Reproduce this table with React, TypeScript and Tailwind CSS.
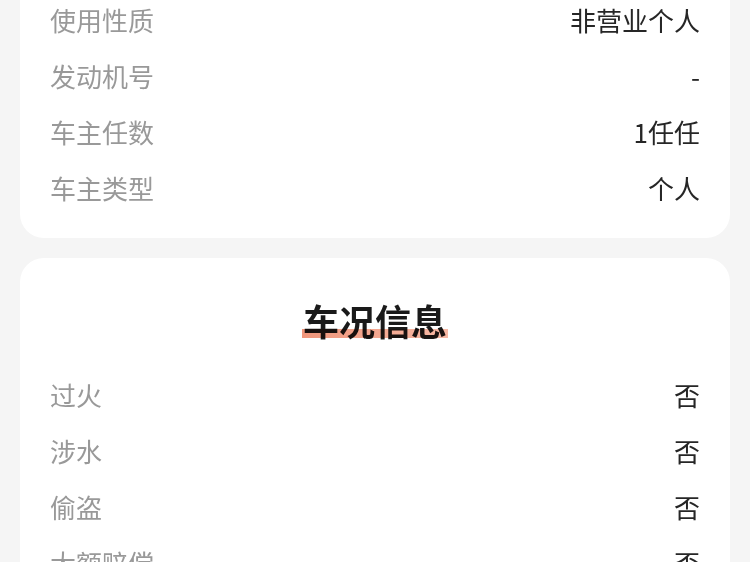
import React from "react";

const font = { fontFamily: '"Noto Sans CJK SC", "Noto Sans", sans-serif' };

function Row({ label, value }: { label: string; value: string }) {
  return (
    <div className="flex h-[56px] items-center justify-between">
      <span className="text-[26px] leading-none text-[#999999]">{label}</span>
      <span className="text-[26px] leading-none text-[#262626]">{value}</span>
    </div>
  );
}

export default function App() {
  return (
    <div className="min-h-[562px] w-[750px] overflow-hidden bg-[#f5f5f5] px-[20px]" style={font}>
      <div className="-mt-[40px] rounded-[24px] bg-white px-[30px] pb-[22px] pt-[32px]">
        <Row label="使用性质" value="非营业个人" />
        <Row label="发动机号" value="-" />
        <Row label="车主任数" value="1任任" />
        <Row label="车主类型" value="个人" />
      </div>
      <div className="mt-[20px] rounded-[24px] bg-white px-[30px] pb-[22px] pt-[40px]">
        <div className="flex justify-center">
          <div className="relative">
            <div className="absolute bottom-[4px] left-[-1px] right-[-1px] h-[9px] bg-gradient-to-r from-[#ee8a6c] to-[#f6b09a] opacity-90" />
            <span className="relative text-[36px] font-bold leading-[44px] text-[#1a1a1a] mix-blend-multiply">车况信息</span>
          </div>
        </div>
        <div className="mt-[25px]">
          <Row label="过火" value="否" />
          <Row label="涉水" value="否" />
          <Row label="偷盗" value="否" />
          <Row label="大额赔偿" value="否" />
        </div>
      </div>
    </div>
  );
}
